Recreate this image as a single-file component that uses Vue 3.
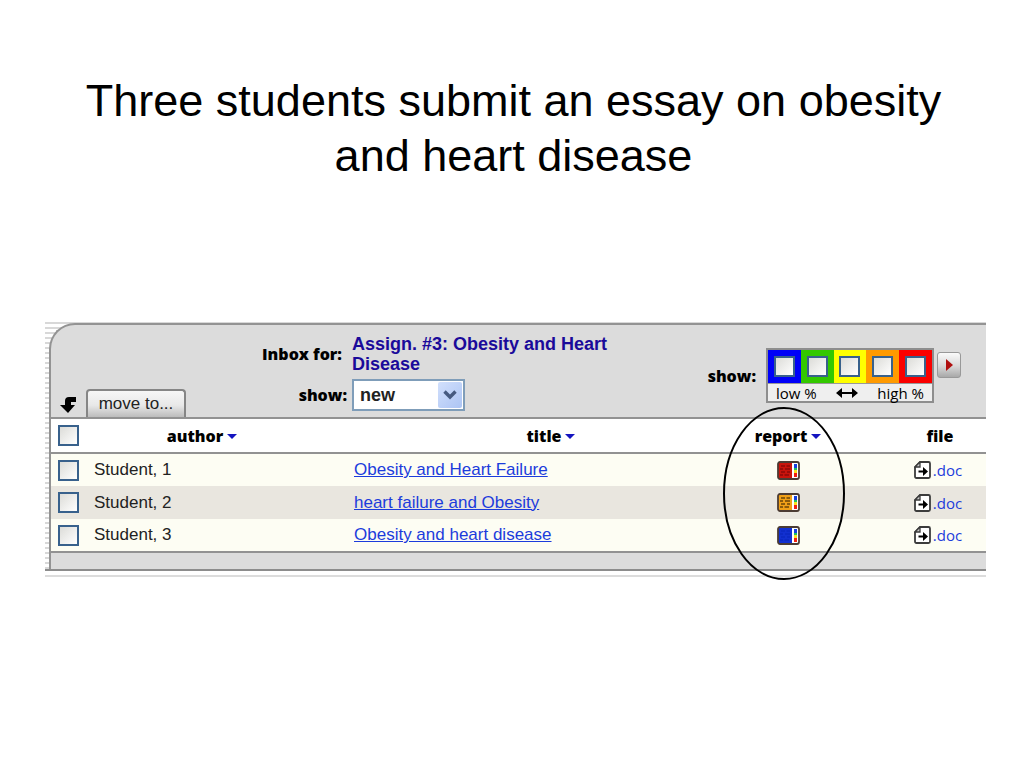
<script setup>
import { ref } from 'vue'

const filter = ref('new')
const bands = [
  { name: 'blue', label: 'Lowest match' },
  { name: 'green', label: 'Low match' },
  { name: 'yellow', label: 'Medium match' },
  { name: 'orange', label: 'High match' },
  { name: 'red', label: 'Highest match' },
]
const papers = [
  { id: 1, author: 'Student, 1', title: 'Obesity and Heart Failure', color: '#c8140c', ink: '#8a0a08' },
  { id: 2, author: 'Student, 2', title: 'heart failure and Obesity', color: '#f0a018', ink: '#6a4408' },
  { id: 3, author: 'Student, 3', title: 'Obesity and heart disease', color: '#1230d0', ink: '#0c28c0' },
]
</script>

<template>
  <main class="slide">
    <h1>Three students submit an essay on obesity and heart disease</h1>

    <section class="frame">
      <div class="panel">
        <div class="toolbar">
          <div class="move">
            <svg width="17" height="18" viewBox="0 0 17 18" aria-hidden="true">
              <path d="M16 1H9Q5 1 5 5V9H0L8 17L15 9H11V6H16Z" fill="#000" />
            </svg>
            <button type="button" class="move-btn">move to...</button>
          </div>

          <div class="inbox">
            <span class="label inbox-label">Inbox for:</span>
            <strong class="assignment">Assign. #3: Obesity and Heart Disease</strong>
            <label class="label" for="filter">show:</label>
            <span class="picker">
              <select id="filter" v-model="filter">
                <option>new</option>
                <option>all</option>
              </select>
              <span class="picker-arrow">
                <svg width="14" height="10" viewBox="0 0 14 10" aria-hidden="true">
                  <path d="M1.500 1.500L7 7L12.500 1.500" fill="none" stroke="#465a80" stroke-width="3.400" />
                </svg>
              </span>
            </span>
          </div>

          <div class="range">
            <span class="label">show:</span>
            <div class="legend">
              <div class="bands">
                <span v-for="b in bands" :key="b.name" class="band" :class="b.name">
                  <input type="checkbox" :aria-label="b.label" />
                </span>
              </div>
              <div class="scale">
                <span>low %</span>
                <svg width="22" height="10" viewBox="0 0 22 10" aria-hidden="true">
                  <path d="M3 5H19" stroke="#000" stroke-width="2" />
                  <path d="M0 5L6 0V10ZM22 5L16 0V10Z" fill="#000" />
                </svg>
                <span>high %</span>
              </div>
            </div>
            <button type="button" class="go" aria-label="Apply">
              <svg width="8" height="12" viewBox="0 0 8 12" aria-hidden="true">
                <path d="M1 0L8 6L1 12Z" fill="#b01010" />
              </svg>
            </button>
          </div>
        </div>

        <table>
          <thead>
            <tr>
              <th class="c-check"><input type="checkbox" aria-label="Select all" /></th>
              <th class="c-author">author<i class="sort"></i></th>
              <th class="c-title">title<i class="sort"></i></th>
              <th class="c-report">report<i class="sort"></i></th>
              <th class="c-file">file</th>
            </tr>
          </thead>
          <tbody>
            <tr v-for="p in papers" :key="p.id">
              <td class="c-check"><input type="checkbox" :aria-label="p.author" /></td>
              <td class="c-author">{{ p.author }}</td>
              <td class="c-title"><a href="#">{{ p.title }}</a></td>
              <td class="c-report">
                <svg width="23" height="19" viewBox="0 0 23 19" role="img" aria-label="Report">
                  <rect x="1" y="1" width="21" height="17" rx="2" fill="#fff" />
                  <path d="M3 1H15V18H3Q1 18 1 16V3Q1 1 3 1Z" :fill="p.color" />
                  <path d="M4 5H8M9.500 5H13M3 8H6M8 8H13M4 11H8M10 11H13M3 14H6M7.500 14H12" :stroke="p.ink" stroke-width="1.300" />
                  <rect x="17" y="3" width="3" height="4" fill="#1440e0" />
                  <rect x="17" y="7" width="3" height="2" fill="#20c060" />
                  <rect x="17" y="9" width="3" height="3" fill="#f8e020" />
                  <rect x="17" y="12" width="3" height="4" fill="#f02010" />
                  <rect x="1" y="1" width="21" height="17" rx="2" fill="none" stroke="#4c3c34" stroke-width="1.800" />
                </svg>
              </td>
              <td class="c-file">
                <a href="#" class="doc">
                  <svg width="17" height="18" viewBox="0 0 17 18" aria-hidden="true">
                    <path d="M6 1H14.500Q16 1 16 2.500V15.500Q16 17 14.500 17H2.500Q1 17 1 15.500V6Z" fill="#fff" stroke="#3c3c3c" stroke-width="1.800" />
                    <path d="M6 1V6H1Z" fill="#c8c8c8" stroke="#3c3c3c" stroke-width="1.300" />
                    <path d="M4.500 9.500H9V6L14 10.500L9 15V11.500H4.500Z" fill="#000" />
                  </svg>
                  <span>.doc</span>
                </a>
              </td>
            </tr>
          </tbody>
        </table>
        <div class="footer"></div>
      </div>
      <svg class="ring" width="124" height="175" viewBox="0 0 124 175" aria-hidden="true">
        <ellipse cx="62" cy="87.500" rx="60" ry="85.500" fill="none" stroke="#000" stroke-width="2" />
      </svg>
    </section>
  </main>
</template>

<style>
body {
  margin: 0;
  background: #fff;
}
</style>

<style scoped>
.slide {
  padding: 73px 38px 40px 45px;
  font-family: "Liberation Sans", Arial, sans-serif;
  font-size: 17px;
  color: #000;
}
h1 {
  margin: 0 0 139px;
  padding: 0 24px 0 20px;
  font-size: 45px;
  line-height: 55px;
  font-weight: 400;
  text-align: center;
}
.frame {
  position: relative;
  padding: 1px 0 0 4px;
  border-bottom: 2px solid #dcdcdc;
  background: repeating-linear-gradient(#d8d8d8 0 2px, #fff 2px 5px);
}
.frame::after {
  content: "";
  display: block;
  height: 4px;
  margin-left: -4px;
  border-top: 2px solid #8c8c8c;
  background: #fff;
}
.panel {
  border: 2px solid #939393;
  border-width: 2px 0 0 2px;
  border-radius: 26px 0 0 0;
  background: #dcdcdc;
}
.toolbar {
  display: flex;
  height: 92px;
}
.move {
  display: flex;
  align-items: flex-end;
  gap: 9px;
  flex: 0 0 200px;
  padding-left: 9px;
}
.move svg {
  margin-bottom: 3px;
}
button {
  font-family: inherit;
  cursor: pointer;
}
.move-btn {
  height: 28px;
  width: 100px;
  padding: 0;
  font-size: 17px;
  color: #222;
  border: 2px solid #858585;
  border-bottom: 0;
  border-radius: 4px 4px 0 0;
  background: linear-gradient(#f6f6f6, #e8e8e8 55%, #bcbcbc);
}
.inbox {
  display: grid;
  grid-template-columns: 87px 270px;
  column-gap: 5px;
  row-gap: 5px;
  align-content: start;
  align-items: center;
  padding-top: 9px;
}
.label,
th {
  font-family: "Open Sans", "Noto Sans", sans-serif;
  font-weight: 800;
  font-size: 16px;
}
.label {
  text-align: right;
  line-height: 20px;
}
.inbox-label {
  padding-right: 5px;
}
.assignment {
  color: #1a0a9a;
  font-size: 18px;
  line-height: 20px;
}
.picker {
  position: relative;
  width: 113px;
  height: 32px;
}
select {
  appearance: none;
  box-sizing: border-box;
  width: 100%;
  height: 100%;
  padding: 0 6px;
  font: bold 18px "Liberation Sans", Arial, sans-serif;
  color: #222;
  background: #fff;
  border: 2px solid #7f9db9;
  border-radius: 0;
}
.picker-arrow {
  position: absolute;
  top: 3px;
  right: 3px;
  display: grid;
  place-items: center;
  width: 24px;
  height: 26px;
  border-radius: 2px;
  background: linear-gradient(135deg, #d2e0fc, #acc4f4);
  pointer-events: none;
}
.range {
  display: flex;
  align-items: flex-start;
  margin-left: auto;
  padding: 23px 25px 0 0;
}
.range .label {
  padding: 18px 10px 0 0;
}
.legend {
  width: 164px;
  border: 2px solid #8e8e8e;
  background: #efefef;
}
.bands {
  display: grid;
  grid-template-columns: repeat(5, 1fr);
  height: 33px;
  border-bottom: 1px solid #999;
}
.band {
  display: grid;
  place-items: center;
}
.blue { background: #0000f8; }
.green { background: #33c800; }
.yellow { background: #ffff00; }
.orange { background: #ff9a00; }
.red { background: #fa0000; }
input {
  appearance: none;
  display: block;
  box-sizing: border-box;
  width: 21px;
  height: 21px;
  margin: 0;
  border: 2px solid #38618c;
  background: linear-gradient(135deg, #dcdcd8, #fff);
}
.scale {
  display: flex;
  align-items: center;
  justify-content: space-between;
  height: 17px;
  padding: 0 8px;
  font: 15px/16px "Open Sans", "Noto Sans", sans-serif;
}
.go {
  display: grid;
  place-items: center;
  width: 24px;
  height: 26px;
  margin: 4px 0 0 3px;
  padding: 0;
  border: 1px solid #999;
  border-radius: 3px;
  background: linear-gradient(#fafafa, #d8d8d8 55%, #a8a8a8);
}
table {
  width: 100%;
  table-layout: fixed;
  border-collapse: collapse;
}
thead tr {
  height: 35px;
  background: #fff;
  border-top: 2px solid #929292;
  border-bottom: 2px solid #929292;
}
tbody tr {
  height: 33px;
  background: #fdfdf3;
}
tbody tr:nth-child(even) {
  background: #e9e6df;
}
tbody tr:last-child {
  border-bottom: 2px solid #929292;
}
th,
td {
  padding: 0;
}
.c-check {
  width: 28px;
  padding-left: 7px;
}
.c-report { width: 96px; text-align: center; }
.c-file { width: 92px; padding-left: 58px; text-align: center; }
td.c-author { padding-left: 8px; }
th.c-author { padding-right: 28px; width: 232px; }
td.c-title { padding-left: 8px; }
th.c-title { padding-left: 16px; }
td {
  line-height: 20px;
  color: #222;
}
td svg { display: block; margin: 0 auto; }
a { color: #1c3cdc; }
.sort {
  display: inline-block;
  margin-left: 4px;
  border: 5px solid transparent;
  border-top: 5px solid #1414c0;
  border-bottom: 0;
  vertical-align: 3px;
}
.doc {
  display: flex;
  align-items: center;
  justify-content: center;
  gap: 2px;
  padding-right: 4px;
  text-decoration: none;
  font: 15px/20px "Open Sans", "Noto Sans", sans-serif;
}
.doc svg { margin: 0; }
.footer {
  height: 16px;
}
.ring {
  position: absolute;
  right: 140px;
  top: 84px;
  pointer-events: none;
}
</style>
